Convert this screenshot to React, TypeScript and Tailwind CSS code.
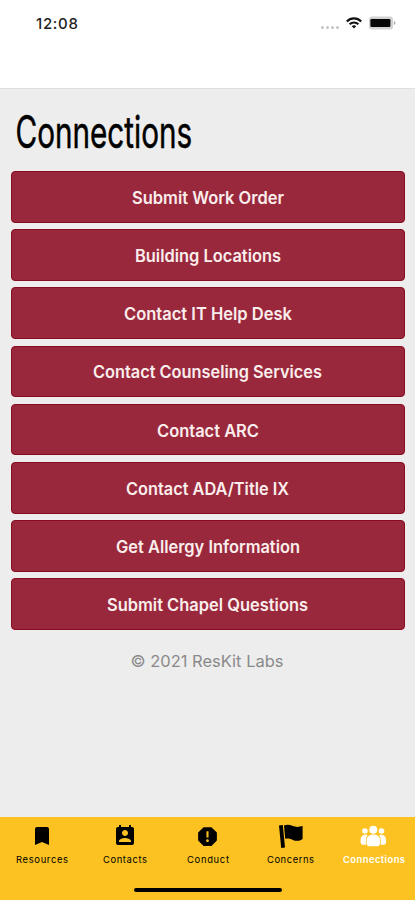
import { MdBookmark, MdPermContactCalendar, MdReport } from "react-icons/md";

const actions = [
  { label: "Submit Work Order", width: 152 },
  { label: "Building Locations", width: 146 },
  { label: "Contact IT Help Desk", width: 168 },
  { label: "Contact Counseling Services", width: 229 },
  { label: "Contact ARC", width: 102 },
  { label: "Contact ADA/Title IX", width: 163 },
  { label: "Get Allergy Information", width: 184 },
  { label: "Submit Chapel Questions", width: 201 }
];

function FlagIcon() {
  return (
    <svg viewBox="0 0 26 26" className="h-[26px] w-[26px]" fill="currentColor" aria-hidden="true">
      <path d="M1 2.4 4.8 2 7 24.6 3.2 25Z" />
      <path d="M6 2.6C9 1.2 11.6 1.6 14.2 2.8 17.4 4.2 20.6 4.3 24.6 3.1V16C21.6 18.3 18 18.3 14.8 16.9 12.2 15.7 10 15 7.2 15.8Z" />
    </svg>
  );
}

function PeopleIcon() {
  return (
    <svg viewBox="0 0 26 22" className="mr-px h-[22px] w-[26px]" fill="currentColor" aria-hidden="true">
      <circle cx="13.3" cy="4.8" r="4" />
      <circle cx="4.9" cy="6" r="2.8" />
      <circle cx="21.5" cy="6" r="2.8" />
      <path d="M13.3 9.4c4.2 0 6.7 2.4 6.7 6v3.4q0 2.4-2.4 2.4H9q-2.4 0-2.4-2.4v-3.4c0-3.6 2.5-6 6.7-6Z" />
      <path d="M7.6 9.9C3.3 9.2.6 11.4.6 14.6v3q0 2.2 2.2 2.2h3.1v-4.6q0-3.2 1.7-5.3Z" />
      <path d="M19 9.9c4.3-.7 7 1.5 7 4.7v3q0 2.2-2.2 2.2h-3.1v-4.6q0-3.2-1.7-5.3Z" />
    </svg>
  );
}

const tabs = [
  { label: "Resources", icon: <MdBookmark className="h-6 w-6" />, width: 52 },
  { label: "Contacts", icon: <MdPermContactCalendar className="h-6 w-6" />, width: 44 },
  { label: "Conduct", icon: <MdReport className="h-[25px] w-[25px]" />, width: 42 },
  { label: "Concerns", icon: <FlagIcon />, width: 47 },
  { label: "Connections", icon: <PeopleIcon />, width: 62, active: true }
];

function StatusBar() {
  return (
    <header className="flex h-[89px] items-start justify-between border-b border-[#dedede] bg-white pl-[36px] pr-[19px] pt-[13px]">
      <span className="text-[15px] font-medium leading-[21px] tracking-[0.7px] text-[#222]">12:08</span>
      <div className="flex h-5 items-center">
        <div className="mr-[7px] mt-2 flex gap-[2px]">
          {[0, 1, 2, 3].map((dot) => (
            <span key={dot} className="h-[3px] w-[3px] rounded-full bg-[#c4c4c4]" />
          ))}
        </div>
        <svg viewBox="0 0 16 12" className="mr-[7px] h-3 w-4" fill="none" stroke="#111" aria-hidden="true">
          <path d="M.8 4.4C4.8.3 11.2.3 15.2 4.4" strokeWidth="2.2" />
          <path d="M3.6 7.3C6 4.9 10 4.9 12.4 7.3" strokeWidth="2" />
          <path d="M5.8 9.2C7 8 9 8 10.2 9.2L8 11.6Z" fill="#111" stroke="none" />
        </svg>
        <svg viewBox="0 0 27 14" className="h-[14px] w-[27px]" aria-hidden="true">
          <rect x="0" y=".4" width="24" height="13.2" rx="3" fill="#d2d2d2" />
          <rect x="1.4" y="3" width="20" height="8" rx="1.2" fill="#050505" />
          <path d="M24.8 5v4q1.7-.6 1.7-2t-1.7-2Z" fill="#aaa" />
        </svg>
      </div>
    </header>
  );
}

export default function App() {
  return (
    <div className="flex h-[900px] w-[415px] flex-col overflow-hidden bg-[#ededed] font-['Inter',sans-serif]">
      <StatusBar />

      <main className="flex flex-1 flex-col pl-[11px] pr-[10px]">
        <h1 className="h-[82px] pl-[5px] pt-[17px] text-black">
          <svg className="h-[54px] w-[180px] overflow-visible" aria-label="Connections">
            <text
              transform="translate(-.5 42.4) scale(.64 1)"
              textLength="276"
              lengthAdjust="spacingAndGlyphs"
              fontSize="44.5"
              fontWeight="400"
              stroke="currentColor"
              strokeWidth=".5"
            >
              Connections
            </text>
          </svg>
        </h1>

        <div className="flex flex-col gap-[6.6px]">
          {actions.map((action) => (
            <button
              key={action.label}
              type="button"
              className="flex h-[51.6px] items-center justify-center rounded-[4px] border border-[#880b20] bg-[#9a283d] pr-px text-[#faeeec]"
            >
              <svg className="h-6 overflow-visible" width={action.width} aria-label={action.label}>
                <text
                  y="18.6"
                  textLength={action.width}
                  lengthAdjust="spacingAndGlyphs"
                  fontSize="17"
                  fontWeight="600"
                  fill="currentColor"
                >
                  {action.label}
                </text>
              </svg>
            </button>
          ))}
        </div>

        <p className="mt-[18px] pr-[2px] text-center text-[16.5px] leading-[26px] text-[#8a8a8a]">
          © 2021 ResKit Labs
        </p>
      </main>

      <footer className="flex h-[83px] flex-col bg-[#fbc222]">
        <nav className="grid grid-cols-5 pt-[7px]">
          {tabs.map((tab) => (
            <a
              key={tab.label}
              className={
                tab.active
                  ? "flex flex-col items-center font-semibold text-white"
                  : "flex flex-col items-center text-black"
              }
            >
              <span className="flex h-6 items-center">{tab.icon}</span>
              <svg className="mt-[3px] h-4 overflow-visible" width={tab.width} aria-label={tab.label}>
                <text y="11.5" textLength={tab.width} fontSize="9.4" fill="currentColor">
                  {tab.label}
                </text>
              </svg>
            </a>
          ))}
        </nav>
        <div className="mx-auto mt-[21px] h-1 w-[148px] rounded-full bg-black" />
      </footer>
    </div>
  );
}
